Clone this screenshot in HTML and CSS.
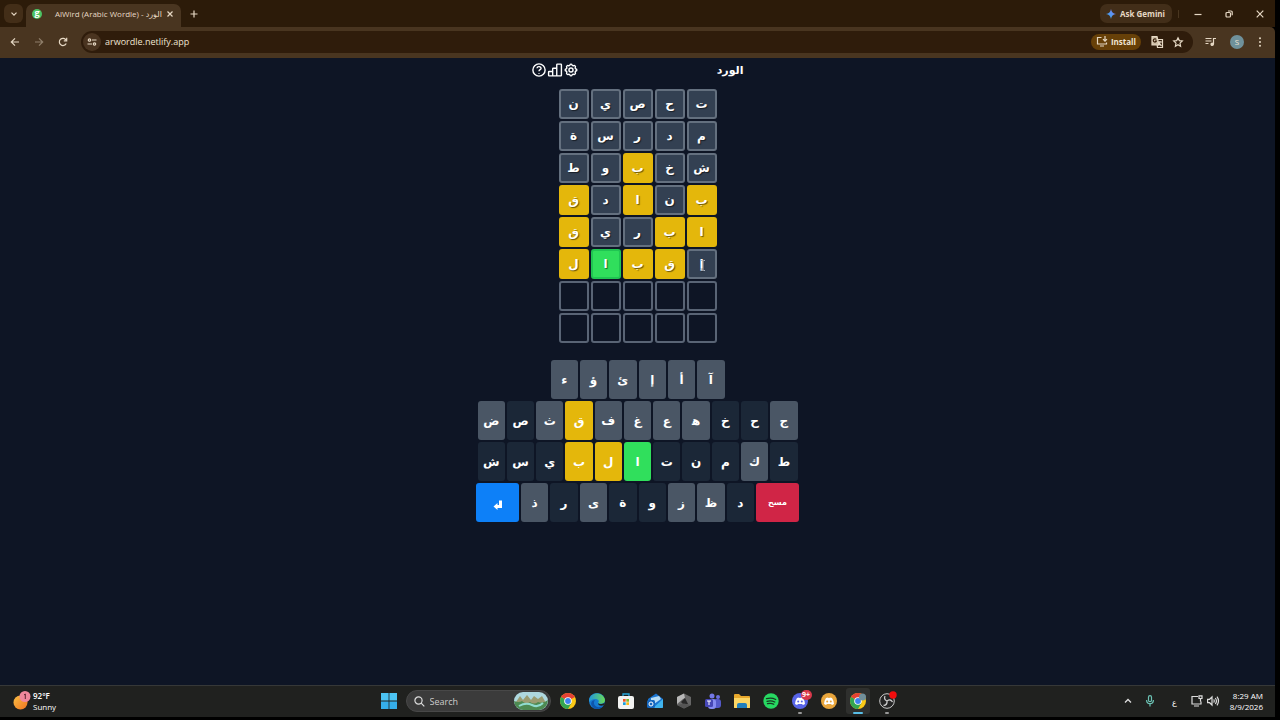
FILE: index.html
```html
<!DOCTYPE html>
<html lang="en">
<head>
<meta charset="utf-8">
<title>AlWird (Arabic Wordle) - الورد</title>
<link rel="stylesheet" href="styles.css">
</head>
<body>
<div class="desktop">
  <header class="tabbar">
    <button class="tab-search" aria-label="Search tabs"><svg width="8" height="8" viewBox="0 0 8 8"><path d="M1.5 2.7 4 5.2l2.500-2.500"/></svg></button>
    <div class="tab">
      <span class="favicon">g</span>
      <span class="tab-title">AlWird (Arabic Wordle) - الورد</span>
      <button class="icon-btn" aria-label="Close tab"><svg width="8" height="8" viewBox="0 0 8 8"><path d="M1.500 1.500l5 5m0-5l-5 5"/></svg></button>
    </div>
    <button class="icon-btn new-tab" aria-label="New tab"><svg width="8" height="8" viewBox="0 0 8 8"><path d="M4 .5v7M.5 4h7"/></svg></button>
    <button class="gemini"><svg width="10" height="10" viewBox="0 0 10 10"><defs><linearGradient id="gem" x1="0" y1="1" x2="1" y2="0"><stop offset="0" stop-color="#e8c34a"/><stop offset=".35" stop-color="#4a9df0"/><stop offset=".7" stop-color="#6c8cf5"/><stop offset="1" stop-color="#ee6b60"/></linearGradient></defs><path d="M5 0c.5 3 2 4.500 5 5-3 .5-4.500 2-5 5-.5-3-2-4.500-5-5 3-.5 4.500-2 5-5z" fill="url(#gem)" stroke="none"/></svg>Ask Gemini</button>
    <div class="window-buttons">
      <button class="icon-btn" aria-label="Minimize"><svg width="8" height="8" viewBox="0 0 8 8"><path d="M.5 4.500h7"/></svg></button>
      <button class="icon-btn" aria-label="Restore"><svg width="8" height="8" viewBox="0 0 8 8"><rect x="1" y="2.500" width="4.500" height="4.500" rx="1"/><path d="M3 1h3q1.200 0 1.200 1.200v3"/></svg></button>
      <button class="icon-btn" aria-label="Close"><svg width="8" height="8" viewBox="0 0 8 8"><path d="M.7.7l6.600 6.600m0-6.600L.7 7.300"/></svg></button>
    </div>
  </header>
  <nav class="toolbar">
    <div class="nav-buttons">
      <button class="icon-btn" aria-label="Back"><svg width="10" height="10" viewBox="0 0 10 10"><path d="M9 5H1.500M5 1.300 1.300 5 5 8.700"/></svg></button>
      <button class="icon-btn dim" aria-label="Forward"><svg width="10" height="10" viewBox="0 0 10 10"><path d="M1 5h7.500M5 1.300 8.700 5 5 8.700"/></svg></button>
      <button class="icon-btn" aria-label="Reload"><svg width="10" height="10" viewBox="0 0 10 10"><path d="M8.200 6.500A3.600 3.600 0 1 1 8 3M8.700.8v3H5.800"/></svg></button>
    </div>
    <div class="address">
      <button class="site-info" aria-label="Site information"><svg width="10" height="10" viewBox="0 0 10 10"><circle cx="2.500" cy="3" r="1.200"/><path d="M5 3h4.500M.5 7H5"/><circle cx="7.500" cy="7" r="1.200"/></svg></button>
      <input class="url" type="text" aria-label="Address" value="arwordle.netlify.app">
      <button class="install"><svg width="12" height="11" viewBox="0 0 12 11"><path d="M5.500 1.500h-4v6.500h9V6.500M4 10h4M9 0v5M7 3.200l2 2 2-2"/></svg>Install</button>
      <button class="icon-btn" aria-label="Translate"><svg width="12" height="12" viewBox="0 0 12 12"><path d="M5.500 3.500h6v8h-5z" /><path d="M1 .5h5l2 8.500H1z" fill="#cdbda5"/><path d="M5.200 3.500a1.600 1.600 0 1 0 .2 1.500H4" stroke="#38200c"/><path d="M7.500 6h3.500M9 5v1c0 2-1 2.500-2 3M8 7l2.500 3"/></svg></button>
      <button class="icon-btn" aria-label="Bookmark"><svg width="10" height="10" viewBox="0 0 10 10"><path d="M5 .8l1.300 2.800 3 .4L7 6.100l.6 3.100L5 7.700 2.400 9.200 3 6.100.7 4l3-.4z"/></svg></button>
    </div>
    <div class="toolbar-end">
      <button class="icon-btn" aria-label="Media"><svg width="11" height="10" viewBox="0 0 11 10"><path d="M.5 1.500h6M.5 4h6M.5 6.500h3M8.500 7V1.500h2.500"/><circle cx="7.200" cy="7.300" r="1.200" fill="#e6d8c4"/></svg></button>
      <button class="avatar" aria-label="Profile">S</button>
      <button class="icon-btn" aria-label="Menu"><svg width="4" height="10" viewBox="0 0 4 10"><g fill="#e6d8c4" stroke="none"><circle cx="2" cy="1.300" r="1"/><circle cx="2" cy="5" r="1"/><circle cx="2" cy="8.700" r="1"/></g></svg></button>
    </div>
  </nav>

  <main class="game" dir="rtl" lang="ar">
    <div class="game-header">
      <h1>الورد</h1>
      <div class="game-tools">
        <button aria-label="الإعدادات"><svg width="14" height="14" viewBox="0 0 24 24"><path d="M10.300 3.300c.4-1.800 3-1.800 3.400 0a1.900 1.900 0 0 0 2.900 1.200c1.600-1 3.800 1.200 2.800 2.800a1.900 1.900 0 0 0 1.200 2.900c1.900.4 1.900 3.200 0 3.600a1.900 1.900 0 0 0-1.200 2.900c1 1.600-1.200 3.800-2.800 2.800a1.900 1.900 0 0 0-2.900 1.200c-.4 1.800-3 1.800-3.400 0a1.900 1.900 0 0 0-2.900-1.200c-1.600 1-3.800-1.200-2.800-2.800a1.900 1.900 0 0 0-1.200-2.900c-1.900-.4-1.900-3.200 0-3.600a1.900 1.900 0 0 0 1.200-2.900c-1-1.600 1.200-3.800 2.800-2.800a1.900 1.900 0 0 0 2.900-1.200z"/><circle cx="12" cy="12" r="3.500"/></svg></button>
        <button aria-label="الإحصائيات"><svg width="14" height="14" viewBox="0 0 24 24"><path d="M1 15.500q0-1 1-1h5q1 0 1 1V22H2q-1 0-1-1zM8 10q0-1 1-1h5q1 0 1 1v12H8zM15 3q0-1 1-1h6q1 0 1 1v18q0 1-1 1h-7z"/></svg></button>
        <button aria-label="مساعدة"><svg width="14" height="14" viewBox="0 0 24 24"><circle cx="12" cy="12" r="10.500"/><path d="M8.500 9c.5-4 7.500-3.500 7 .5-.3 2-3.500 2-3.500 4.500M12 17v1.500"/></svg></button>
      </div>
    </div>

    <div class="board">
      <span class="cell absent">ت</span><span class="cell absent">ح</span><span class="cell absent">ص</span><span class="cell absent">ي</span><span class="cell absent">ن</span>
      <span class="cell absent">م</span><span class="cell absent">د</span><span class="cell absent">ر</span><span class="cell absent">س</span><span class="cell absent">ة</span>
      <span class="cell absent">ش</span><span class="cell absent">خ</span><span class="cell present">ب</span><span class="cell absent">و</span><span class="cell absent">ط</span>
      <span class="cell present">ب</span><span class="cell absent">ن</span><span class="cell present">ا</span><span class="cell absent">د</span><span class="cell present">ق</span>
      <span class="cell present">ا</span><span class="cell present">ب</span><span class="cell absent">ر</span><span class="cell absent">ي</span><span class="cell present">ق</span>
      <span class="cell absent pointed">إ<svg class="caret" width="6" height="11" viewBox="0 0 6 11"><path d="M1 .5h1.500l.5.5.5-.5H5M3 1v9M1 10.500h1.500L3 10l.5.500H5"/></svg></span><span class="cell present">ق</span><span class="cell present">ب</span><span class="cell correct">ا</span><span class="cell present">ل</span>
      <span class="cell"></span><span class="cell"></span><span class="cell"></span><span class="cell"></span><span class="cell"></span>
      <span class="cell"></span><span class="cell"></span><span class="cell"></span><span class="cell"></span><span class="cell"></span>
    </div>

    <div class="keyboard">
      <div class="key-row short">
        <button class="key">آ</button><button class="key">أ</button><button class="key">إ</button><button class="key">ئ</button><button class="key">ؤ</button><button class="key">ء</button>
      </div>
      <div class="key-row">
        <button class="key">ج</button><button class="key used">ح</button><button class="key used">خ</button><button class="key">ه&zwj;</button><button class="key">ع</button><button class="key">غ</button><button class="key">ف</button><button class="key present">ق</button><button class="key">ث</button><button class="key used">ص</button><button class="key">ض</button>
      </div>
      <div class="key-row">
        <button class="key used">ط</button><button class="key">ك</button><button class="key used">م</button><button class="key used">ن</button><button class="key used">ت</button><button class="key correct">ا</button><button class="key present">ل</button><button class="key present">ب</button><button class="key used">ي</button><button class="key used">س</button><button class="key used">ش</button>
      </div>
      <div class="key-row long">
        <button class="key wide delete">مسح</button><button class="key used">د</button><button class="key">ظ</button><button class="key">ز</button><button class="key used">و</button><button class="key used">ة</button><button class="key">ى</button><button class="key used">ر</button><button class="key">ذ</button><button class="key wide enter" aria-label="إدخال"><svg width="10" height="10" viewBox="0 0 10 10"><path d="M.5 6.500 4.500 3v2H6V.5h3V8H4.500v2z" fill="#fff"/></svg></button>
      </div>
    </div>
  </main>

  <footer class="taskbar">
    <div class="weather">
      <svg width="20" height="20" viewBox="0 0 20 20"><defs><linearGradient id="sun" x1="0" y1="0" x2="1" y2="1"><stop offset="0" stop-color="#fbc044"/><stop offset="1" stop-color="#ee7321"/></linearGradient></defs><circle cx="8.500" cy="11.500" r="7" fill="url(#sun)"/><circle cx="13" cy="5.500" r="5.500" fill="#f0879c"/><path d="M12 4 13.300 3V8" stroke="#5c2632" fill="none"/></svg>
      <div><b>92°F</b><br>Sunny</div>
    </div>
    <div class="apps">
      <button class="app" aria-label="Start"><svg width="16" height="16" viewBox="0 0 16 16"><g fill="#4cc4f3"><path d="M0 0h7.600v7.600H0zM8.400 0H16v7.600H8.400z"/><path d="M0 8.400h7.600V16H0zM8.400 8.400H16V16H8.400z" fill="#35aeea"/></g></svg></button>
      <label class="search"><svg width="11" height="11" viewBox="0 0 11 11"><circle cx="4.500" cy="4.500" r="3.600"/><path d="M7.200 7.200 10.300 10.300"/></svg><input type="text" placeholder="Search" aria-label="Search"><svg class="scene" width="34" height="18" viewBox="0 0 34 18"><rect width="34" height="18" rx="9" fill="#aed8df"/><path d="M2 10 6 4l3 4 4-5 4 5 3-4 4 3 4-3 4 7v2H2z" fill="#9a9c72"/><path d="M0 9q5 2 8 0 4 4 8 1 4 3 8 0 5 2 10-2-1 9-9 10H9Q1 17 0 9z" fill="#4d8a52"/><path d="M5 14q7-4 13-1t11-2" stroke="#8fdccf" stroke-width="2" fill="none"/></svg></label>
      <button class="app" aria-label="Chrome"><svg width="16" height="16" viewBox="0 0 16 16"><circle cx="8" cy="8" r="8" fill="#fbc916"/><path d="M8 8 1.100 4A8 8 0 0 1 14.900 4z" fill="#e44134"/><path d="M1.100 4A8 8 0 0 0 8 16l3.500-6z" fill="#34a651"/><circle cx="8" cy="8" r="3.800" fill="#fff"/><circle cx="8" cy="8" r="2.900" fill="#3e82ee"/></svg></button>
      <button class="app" aria-label="Edge"><svg width="16" height="16" viewBox="0 0 16 16"><defs><linearGradient id="edge"><stop offset="0" stop-color="#2197dd"/><stop offset="1" stop-color="#69d955"/></linearGradient></defs><circle cx="8" cy="8" r="8" fill="#167bd2"/><path d="M0 7C1-1 14-2 16 7c0 4-5 4.500-7 3 2-2 0-4-3-4S1 8 0 9z" fill="url(#edge)"/><path d="M6 7c-3 4 1 8 5 7 2 0 3-1 4-2-3 5-10 5-12 1C1 10 3 7 6 7z" fill="#0e55ac"/><path d="M9 10c1 1.500 4 1.500 7-.5l-1 2.500c-3 1.500-6 .5-6-2z" fill="#20211f"/></svg></button>
      <button class="app" aria-label="Store"><svg width="16" height="16" viewBox="0 0 16 16"><path d="M5 5V1h6v4" fill="none" stroke="#28a8dc" stroke-width="1.300"/><rect y="3" width="16" height="13" rx="2" fill="#f3f3f1"/><path d="M5 6h2.700v2.700H5z" fill="#ee5125"/><path d="M8.300 6H11v2.700H8.300z" fill="#7cb928"/><path d="M5 9.300h2.700V12H5z" fill="#199fdd"/><path d="M8.300 9.300H11V12H8.300z" fill="#fab814"/></svg></button>
      <button class="app" aria-label="Outlook"><svg width="16" height="16" viewBox="0 0 16 16"><path d="M1 6 9 .5 16 6v8q0 1-1 1H3q-2 0-2-2z" fill="#1974d0"/><path d="M4 5 12 3l2 3-7 5-3-2z" fill="#b7ddf5"/><path d="M16 6v8q0 1-1 1H6z" fill="#40b4ee"/><rect y="7" width="8" height="8" rx="1.500" fill="#1466bd"/><circle cx="4" cy="11" r="2" fill="none" stroke="#fff"/></svg></button>
      <button class="app" aria-label="Game"><svg width="16" height="16" viewBox="0 0 16 16"><path d="M8 .5 15 4v8l-7 3.500L1 12V4z" fill="#666"/><path d="M8 .5 1 4v7l6-5 2-1z" fill="#b8b8b8"/><path d="M5 9 9 5l3 6-4 1z" fill="#282828"/><path d="M1 12 8 10.500l7 1.500-7 3.500z" fill="#555"/></svg></button>
      <button class="app" aria-label="Teams"><svg width="16" height="16" viewBox="0 0 16 16"><circle cx="7" cy="3" r="2.500" fill="#7478e6"/><circle cx="13" cy="4" r="2" fill="#696ee0"/><rect x="8" y="6" width="8" height="9" rx="3" fill="#5459c9"/><rect x="3" y="6" width="8" height="10" rx="3" fill="#858bf0"/><rect y="6" width="8" height="8" rx="1.500" fill="#4647b5"/><path d="M2 8h4M4 8v4" stroke="#fff"/></svg></button>
      <button class="app" aria-label="File Explorer"><svg width="16" height="16" viewBox="0 0 16 16"><path d="M0 2q0-1 1-1h4l2 2h8q1 0 1 1v11H0z" fill="#e8a82c"/><path d="M0 5h16v9q0 1-1 1H1q-1 0-1-1z" fill="#fbd665"/><path d="M3 15v-3q0-2 2-2h6q2 0 2 2v3z" fill="#207fbd"/></svg></button>
      <button class="app" aria-label="Spotify"><svg width="16" height="16" viewBox="0 0 16 16"><circle cx="8" cy="8" r="7.700" fill="#27d962"/><path d="M3.500 5.700q5-1.500 9.200.8M4 8.300q4-1.300 7.800.7M4.500 10.700q3.500-1 6.300.6" fill="none" stroke="#183a22" stroke-width="1.300" stroke-linecap="round"/></svg></button>
      <button class="app running" aria-label="Discord"><svg width="16" height="16" viewBox="0 0 16 16"><circle cx="8" cy="8" r="8" fill="#5865e8"/><path d="M5 5 7 4.500 7.500 5h1L9 4.500l2 .5q2 3 2 6l-2 1-1-1H6l-1 1-2-1q0-3 2-6z" fill="#fff"/><g fill="#5865e8"><circle cx="6.200" cy="8.500" r="1"/><circle cx="9.800" cy="8.500" r="1"/></g></svg><span class="badge">9+</span></button>
      <button class="app" aria-label="Discord alternate"><svg width="16" height="16" viewBox="0 0 16 16"><circle cx="8" cy="8" r="8" fill="#e9a63c"/><path d="M5 5 7 4.500 7.500 5h1L9 4.500l2 .5q2 3 2 6l-2 1-1-1H6l-1 1-2-1q0-3 2-6z" fill="#fff"/><g fill="#e9a63c"><circle cx="6.200" cy="8.500" r="1"/><circle cx="9.800" cy="8.500" r="1"/></g></svg></button>
      <button class="app active" aria-label="Chrome window"><svg width="16" height="16" viewBox="0 0 16 16"><circle cx="8" cy="8" r="8" fill="#fbc916"/><path d="M8 8 1.100 4A8 8 0 0 1 14.900 4z" fill="#e44134"/><path d="M1.100 4A8 8 0 0 0 8 16l3.500-6z" fill="#34a651"/><circle cx="8" cy="8" r="3.800" fill="#fff"/><circle cx="8" cy="8" r="2.900" fill="#3e82ee"/><circle cx="12.500" cy="4" r="3.500" fill="#718f99"/></svg></button>
      <button class="app running" aria-label="OBS"><svg width="16" height="16" viewBox="0 0 16 16"><circle cx="8" cy="8" r="7.300" fill="#252525" stroke="#c9c9c9"/><path d="M8 8Q4.500 6.500 6 3M8 8q3.500-2.500 5.500 1M8 8q.5 4-3.500 4.500" fill="none" stroke="#c9c9c9" stroke-width="1.300"/><circle cx="14" cy="2" r="3.700" fill="#f20d0d"/></svg></button>
    </div>
    <div class="tray">
      <svg width="8" height="8" viewBox="0 0 8 8"><path d="M1 5.500l3-3 3 3" stroke-width="1.300"/></svg>
      <svg class="mic" width="8" height="12" viewBox="0 0 8 12"><rect x="2.500" y=".7" width="3" height="6" rx="1.500"/><path d="M.6 5q0 3.700 3.400 3.700T7.400 5M4 9v2.500"/></svg>
      <span class="input-lang" lang="ar">ع</span>
      <div class="status">
        <svg width="12" height="12" viewBox="0 0 12 12"><path d="M7 1.500H1v7.500h9V6.500M3 11h5M8 .8h3v2.700H8zM9.500 3.500v3"/></svg>
        <svg width="12" height="12" viewBox="0 0 12 12"><path d="M.6 4.300h2L5 2v8L2.600 7.700h-2zM6.700 4.300q1.300 1.700 0 3.400M8.300 3q2.300 3 0 6M10 1.700q3 4.300 0 8.600"/></svg>
      </div>
      <div class="clock">8:29 AM<br>8/9/2026</div>
    </div>
  </footer>
</div>
</body>
</html>
```

FILE: styles.css
```css
* { box-sizing: border-box; }

body {
  margin: 0;
  background: #000;
  color: #fff;
  font-family: "Open Sans", "Noto Sans", "DejaVu Sans", sans-serif;
  font-size: 9px;
}

button, input {
  font: inherit;
  color: inherit;
  background: none;
  border: 0;
  padding: 0;
  margin: 0;
  min-width: 0;
}

svg { display: block; flex: none; overflow: visible; }

.desktop {
  min-height: 100vh;
  padding: 0 5px 3px 0;
  display: flex;
  flex-direction: column;
}

/* Browser chrome */
.tabbar {
  display: flex;
  align-items: center;
  height: 27px;
  padding: 0 11px 0 4px;
  background: #2c1b09;
  color: #e6d8c4;
}

.tabbar svg, .toolbar svg {
  fill: none;
  stroke: #e6d8c4;
  stroke-width: 1.2px;
}

.icon-btn { display: flex; }

.tab-search {
  display: grid;
  place-items: center;
  width: 19px;
  height: 19px;
  border-radius: 6px;
  background: #432e18;
}

.tab {
  display: flex;
  align-items: center;
  align-self: flex-end;
  height: 23px;
  width: 155px;
  margin-left: 3px;
  padding: 0 7px 4px 6px;
  border-radius: 7px 7px 0 0;
  background: #493520;
}

.favicon {
  flex: none;
  width: 10px;
  height: 10px;
  border-radius: 50%;
  background: #4cc363;
  color: #fff;
  font-weight: 700;
  line-height: 8px;
  text-align: center;
}

.tab-title {
  flex: 1;
  margin-left: 13px;
  font-size: 8px;
  white-space: nowrap;
}

.new-tab { margin-left: 9px; }

.gemini {
  display: flex;
  align-items: center;
  gap: 4px;
  height: 19px;
  width: 72px;
  padding: 0 6px;
  margin-left: auto;
  border-radius: 7px;
  background: #422e19;
  font-size: 8px;
  font-weight: 700;
  white-space: nowrap;
}

.window-buttons {
  display: flex;
  gap: 23px;
  margin-left: 6px;
  padding-left: 15px;
  border-left: 1px solid #493620;
}

.toolbar {
  display: flex;
  align-items: center;
  height: 31px;
  padding: 0 13px 1px 10px;
  background: #493520;
  border-bottom: 1px solid #493520;
  border-radius: 0 5px 0 0;
  color: #f0e4d2;
}

.nav-buttons { display: flex; gap: 14px; }
.dim { opacity: .45; }

.address {
  flex: 1;
  display: flex;
  align-items: center;
  gap: 10px;
  height: 22px;
  margin: 0 12px 0 13px;
  padding: 0 10px 0 2px;
  border-radius: 11px;
  background: #2f1c0b;
}

.site-info {
  display: grid;
  place-items: center;
  width: 18px;
  height: 18px;
  border-radius: 50%;
  background: #4a3420;
}

.url { flex: 1; margin-left: -6px; }

.install {
  display: flex;
  align-items: center;
  gap: 3px;
  height: 16px;
  padding: 0 5px;
  border-radius: 8px;
  background: #674008;
  font-size: 8px;
  font-weight: 700;
}

.toolbar-end { display: flex; align-items: center; gap: 14px; }

.avatar {
  width: 14px;
  height: 14px;
  border-radius: 50%;
  background: #6f919b;
  font-size: 8px;
  line-height: 14px;
}

/* Game page */
.game {
  flex: 1;
  display: flex;
  flex-direction: column;
  align-items: center;
  padding-top: 3px;
  background: #0e1525;
  font-family: "DejaVu Sans", sans-serif;
  font-weight: 700;
}

.game-header {
  display: flex;
  align-items: center;
  justify-content: space-between;
  width: 100%;
  max-width: 212px;
  height: 18px;
}

h1 { margin: 0; padding-top: 1px; font-size: 11px; line-height: 18px; }

.game-tools { display: flex; gap: 2px; }

.game-tools svg {
  fill: none;
  stroke: #fff;
  stroke-width: 2.4;
}

.board {
  display: grid;
  grid-template-columns: repeat(5, 30px);
  grid-auto-rows: 30px;
  gap: 2px;
  margin-top: 10px;
}

.cell {
  display: grid;
  place-items: center;
  border: 2px solid #596475;
  border-radius: 3px;
  font-size: 12px;
  line-height: 16px;
  text-shadow: 1px 1px 1px #0008;
}

.cell.absent { background: #334052; border-color: #64707f; }
.cell.present { border-color: #e4b70b; }
.cell.correct { border-color: #20c552; }
.present { background: #e4b70b; }
.correct { background: #30df5c; }

.pointed { position: relative; }

.caret {
  position: absolute;
  left: 11px;
  top: 9px;
  fill: none;
  stroke: #aab2bd;
}

.keyboard {
  display: flex;
  flex-direction: column;
  align-items: center;
  gap: 2px;
  width: 100%;
  margin-top: 17px;
}

.key-row {
  display: flex;
  gap: 2px;
  width: 100%;
  max-width: 320px;
}

.key-row.short { max-width: 174px; }
.key-row.long { max-width: 323px; }

.key {
  flex: 1;
  display: grid;
  place-items: center;
  height: 39px;
  padding-top: 1px;
  border-radius: 3px;
  background: #4a5665;
  font-size: 12px;
  line-height: 16px;
}

.key.used { background: #1b2737; }
.key.present { background: #e4b70b; }
.key.correct { background: #30df5c; }
.key.wide { flex: 0 0 43px; font-size: 8px; }
.key.delete { background: #d02546; }
.key.enter { padding-top: 4px; background: #0d80f8; }

/* Taskbar */
.taskbar {
  display: grid;
  grid-template-columns: 1fr auto 1fr;
  align-items: center;
  height: 32px;
  padding: 0 12px 1px;
  background: #20211f;
  border-top: 1px solid #363838;
  line-height: 11px;
}

.weather { display: flex; gap: 1px; align-items: center; font-size: 8px; }
.weather b { font-weight: 600; }

.apps { display: flex; align-items: center; gap: 5px; }

.app {
  position: relative;
  display: grid;
  place-items: center;
  width: 24px;
  height: 26px;
  border-radius: 3px;
}

.app.active { background: #2f302e; }

.running::after, .active::after {
  content: "";
  position: absolute;
  bottom: 0;
  width: 4px;
  height: 2px;
  border-radius: 1px;
  background: #989898;
}

.active::after { width: 10px; background: #58bde6; }

.badge {
  position: absolute;
  top: 2px;
  right: 0;
  width: 11px;
  height: 10px;
  border-radius: 5px;
  background: #d8384b;
  font-size: 7px;
  font-weight: 700;
  line-height: 10px;
}

.search {
  display: flex;
  align-items: center;
  gap: 5px;
  width: 145px;
  height: 22px;
  padding: 0 2px 0 7px;
  border-radius: 11px;
  background: #3b3b3b;
  border: 1px solid #484848;
  font-size: 9px;
}

.search input { flex: 1; }
.search input::placeholder { color: #ccc; opacity: 1; }

.search svg, .tray svg {
  fill: none;
  stroke: #ddd;
  stroke-width: 1.2px;
}

.search .scene { stroke: none; }

.tray {
  display: flex;
  align-items: center;
  justify-content: flex-end;
  gap: 14px;
  font-size: 8px;
}

.tray .mic { stroke: #6cc3b5; }
.input-lang { margin-left: 4px; }
.status { display: flex; gap: 4px; }
.clock { text-align: right; margin-left: -3px; }
```
